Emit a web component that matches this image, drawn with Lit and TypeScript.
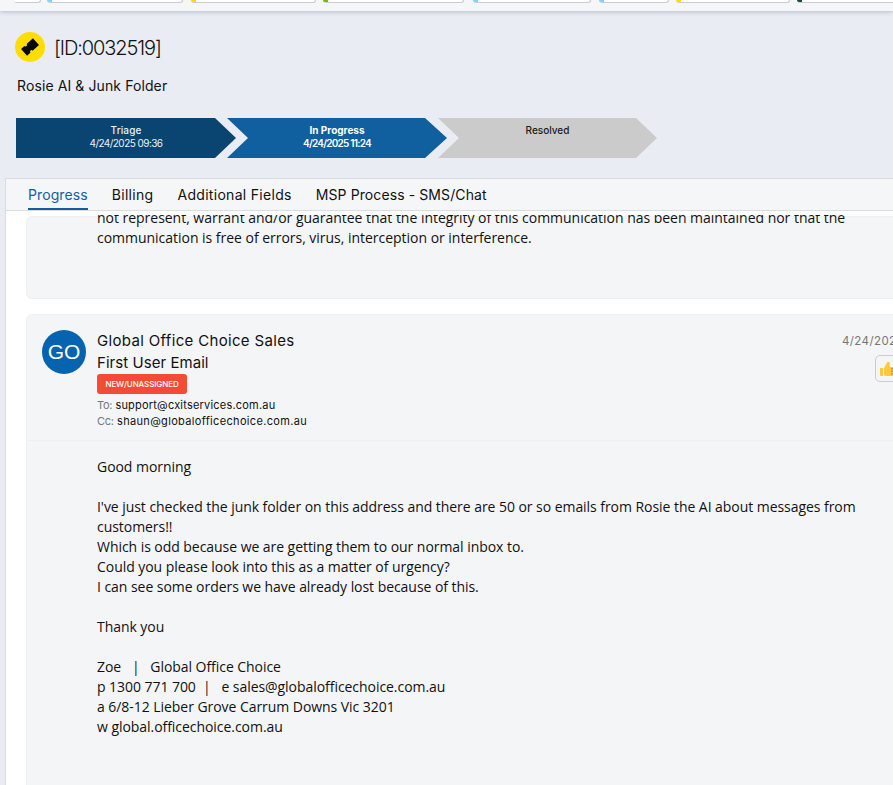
import { LitElement, html, css } from "lit";
import { customElement } from "lit/decorators.js";

@customElement("app-root")
export class AppRoot extends LitElement {
  static styles = css`
    :host {
      display: block;
      width: 893px;
      height: 785px;
      overflow: hidden;
      background: #e9ecf2;
      font-family: "Inter", "Liberation Sans", sans-serif;
      color: #111;
    }
    .top {
      height: 11px;
      background: #f5f6f8;
      box-shadow: 0 1px 4px rgba(120, 130, 145, 0.45);
      display: flex;
      align-items: flex-start;
      padding: 0 0 0 14px;
      overflow: hidden;
      position: relative;
    }
    .chip {
      flex: none;
      height: 3px;
      background: #fff;
      border: 1px solid #ccc;
      border-top: 0;
      border-left-width: 0;
      border-radius: 0 0 4px 4px;
      box-sizing: border-box;
      overflow: hidden;
    }
    .chip i {
      display: block;
      width: 5px;
      height: 100%;
      background: var(--c);
    }
    .head {
      display: flex;
      align-items: center;
      gap: 9px;
      height: 30px;
      padding: 21px 0 0 15px;
    }
    .badge {
      width: 30px;
      height: 30px;
      border-radius: 50%;
      background: #ffdd00;
      display: flex;
      align-items: center;
      justify-content: center;
    }
    .id {
      font-size: 20px;
      font-weight: 300;
      line-height: 30px;
      letter-spacing: -1.1px;
      margin-top: 2px;
    }
    .subject {
      padding: 13px 0 0 17px;
      font-size: 14px;
      line-height: 22px;
      letter-spacing: 0.1px;
    }
    .steps {
      display: flex;
      padding: 21px 0 0 16px;
      height: 40px;
    }
    .step {
      height: 40px;
      flex: none;
      font-size: 10px;
      line-height: 13px;
      text-align: center;
      box-sizing: border-box;
      padding-top: 6px;
    }
    .step b {
      display: block;
      font-weight: 500;
    }
    .s1 {
      width: 220px;
      background: #0a4471;
      color: #e8f2fa;
      clip-path: polygon(0 0, 199px 0, 220px 20px, 199px 40px, 0 40px);
      letter-spacing: -0.55px;
    }
    .s1 b { letter-spacing: 0.1px; }
    .s2 {
      width: 220px;
      margin-left: -9px;
      background: #105f9f;
      color: #fff;
      clip-path: polygon(0 0, 198px 0, 220px 20px, 198px 40px, 0 40px, 21px 20px);
      font-weight: 600;
      letter-spacing: -0.75px;
    }
    .s2 b { font-weight: 700; letter-spacing: 0; }
    .s3 {
      width: 219px;
      margin-left: -9px;
      background: #cbcbcb;
      color: #1a1a1a;
      clip-path: polygon(0 0, 198px 0, 219px 20px, 198px 40px, 0 40px, 21px 20px);
    }
    .panel {
      margin: 20px 0 0 5px;
      height: 607px;
      background: #fff;
      border-left: 1px solid #d9dde3;
      border-top: 1px solid #d9dde3;
      box-sizing: border-box;
      display: flex;
      flex-direction: column;
      overflow: hidden;
    }
    .tabs {
      flex: none;
      height: 32px;
      box-sizing: border-box;
      display: flex;
      gap: 24px;
      padding: 0 0 0 22px;
      background: #f5f6f8;
      border-bottom: 1px solid #d9dde3;
      font-size: 14px;
      line-height: 31px;
    }
    .tab { position: relative; white-space: nowrap; letter-spacing: 0.1px; }
    .tab.wide { letter-spacing: 0.3px; }
    .tab.on { color: #105f9f; }
    .tab.on::after {
      content: "";
      position: absolute;
      left: 0;
      right: 0;
      bottom: 0;
      height: 2px;
      background: #105f9f;
    }
    .scroll {
      flex: 1;
      margin-top: 4px;
      padding-left: 20px;
      overflow: hidden;
      font-family: "Open Sans", "Noto Sans", sans-serif;
      font-size: 14px;
      line-height: 20px;
      letter-spacing: -0.05px;
    }
    .card {
      background: #f4f5f7;
      border: 1px solid #eef0f2;
      border-right: 0;
      border-radius: 6px 0 0 6px;
      white-space: nowrap;
    }
    .prev {
      height: 83px;
      margin-top: 1px;
      padding: 0 0 0 70px;
      box-sizing: border-box;
      letter-spacing: -0.025px;
    }
    .prev p { margin: 0; }
    .prev p:first-child { margin-top: -9px; }
    .mail {
      margin-top: 15px;
      height: 500px;
    }
    .mhead {
      height: 126px;
      box-sizing: border-box;
      position: relative;
      display: flex;
      gap: 11px;
      padding: 15px 0 0 15px;
      border-bottom: 1px solid #eef0f2;
    }
    .avatar {
      flex: none;
      width: 44px;
      height: 44px;
      border-radius: 50%;
      background: #0563b0;
      color: #fff;
      font-family: "Liberation Sans", sans-serif;
      font-size: 21px;
      letter-spacing: 0;
      display: flex;
      align-items: center;
      justify-content: center;
    }
    .who {
      font-family: "Inter", "Liberation Sans", sans-serif;
      min-width: 0;
    }
    .name {
      font-size: 15px;
      line-height: 22px;
      letter-spacing: 0.33px;
    }
    .title {
      font-size: 15px;
      line-height: 22px;
      letter-spacing: 0.05px;
    }
    .tag {
      width: 90px;
      height: 20px;
      line-height: 20px;
      text-align: center;
      background: #f44b36;
      color: #fff;
      font-size: 8px;
      font-weight: 500;
      letter-spacing: -0.1px;
      border-radius: 3px;
    }
    .addr {
      font-size: 11px;
      line-height: 16px;
      letter-spacing: 0.2px;
    }
    .addr.cc { letter-spacing: 0.33px; }
    .addr span { color: #777; letter-spacing: -0.3px; }
    .tag + .addr { margin-top: 3px; }
    .date {
      position: absolute;
      left: 815px;
      top: 18px;
      font-size: 11.5px;
      line-height: 16px;
      font-family: "Inter", "Liberation Sans", sans-serif;
      color: #777;
      letter-spacing: 0.4px;
    }
    .like {
      position: absolute;
      left: 848px;
      top: 40px;
      width: 40px;
      height: 27px;
      box-sizing: border-box;
      border: 1px solid #ccc;
      border-radius: 5px;
      background: #f4f5f7;
      padding: 4px 0 0 3px;
    }
    .body {
      padding: 16px 0 0 70px;
    }
    .body p { margin: 0; }
    .gap { height: 20px; }
  `;

  render() {
    const chips: [number, number, string][] = [
      [0, 27, "#fff"], [6, 136, "#7fd6f5"], [8, 125, "#ffdd00"], [7, 141, "#7ab800"],
      [9, 118, "#7fd6f5"], [8, 70, "#7fd6f5"], [7, 114, "#ffdd00"], [7, 120, "#1c4a35"],
    ];
    return html`
      <div class="top">
        ${chips.map(
          ([m, w, c]) => html`<div class="chip" style="margin-left:${m}px;width:${w}px;--c:${c}"><i></i></div>`
        )}
      </div>
      <div class="head">
        <div class="badge">
          <svg width="20" height="20" viewBox="0 0 20 20">
            <g transform="rotate(-42 10 10)">
              <path fill="#0a0a0a" d="M2 5.500h4.500a1.500 1.500 0 0 0 3 0H18v9H9.500a1.500 1.500 0 0 0-3 0H2z"/>
            </g>
          </svg>
        </div>
        <div class="id">[ID:0032519]</div>
      </div>
      <div class="subject">Rosie AI &amp; Junk Folder</div>
      <div class="steps">
        <div class="step s1"><b>Triage</b>4/24/2025 09:36</div>
        <div class="step s2"><b>In Progress</b>4/24/2025 11:24</div>
        <div class="step s3"><b>Resolved</b></div>
      </div>
      <div class="panel">
        <div class="tabs">
          <div class="tab on">Progress</div>
          <div class="tab wide">Billing</div>
          <div class="tab wide">Additional Fields</div>
          <div class="tab">MSP Process - SMS/Chat</div>
        </div>
        <div class="scroll">
          <div class="card prev">
            <p>not represent, warrant and/or guarantee that the integrity of this communication has been maintained nor that the</p>
            <p>communication is free of errors, virus, interception or interference.</p>
          </div>
          <div class="card mail">
            <div class="mhead">
              <div class="avatar">GO</div>
              <div class="who">
                <div class="name">Global Office Choice Sales</div>
                <div class="title">First User Email</div>
                <div class="tag">NEW/UNASSIGNED</div>
                <div class="addr"><span>To:</span> support@cxitservices.com.au</div>
                <div class="addr cc"><span>Cc:</span> shaun@globalofficechoice.com.au</div>
              </div>
              <div class="date">4/24/2025</div>
              <div class="like">
                <svg width="20" height="18" viewBox="0 0 20 18">
                  <path fill="#ffc83d" d="M1 8h3v8H2a1 1 0 0 1-1-1z"/>
                  <path fill="#ffc83d" d="M5 8 8 2.500c.6-1.400 2.800-1 2.800.7V7h6v9H7a2 2 0 0 1-2-2z"/>
                  <path fill="#f08a24" d="M12 8h8v1.500h-8zm0 2.500h8V12h-8zm0 2.500h8v1.500h-8z"/>
                </svg>
              </div>
            </div>
            <div class="body">
              <p>Good morning</p>
              <div class="gap"></div>
              <p>I've just checked the junk folder on this address and there are 50 or so emails from Rosie the AI about messages from</p>
              <p>customers!!</p>
              <p>Which is odd because we are getting them to our normal inbox to.</p>
              <p>Could you please look into this as a matter of urgency?</p>
              <p>I can see some orders we have already lost because of this.</p>
              <div class="gap"></div>
              <p>Thank you</p>
              <div class="gap"></div>
              <p>Zoe &nbsp; | &nbsp; Global Office Choice</p>
              <p>p 1300 771 700 &nbsp;| &nbsp; e sales@globalofficechoice.com.au</p>
              <p>a 6/8-12 Lieber Grove Carrum Downs Vic 3201</p>
              <p>w global.officechoice.com.au</p>
            </div>
          </div>
        </div>
      </div>
    `;
  }
}
